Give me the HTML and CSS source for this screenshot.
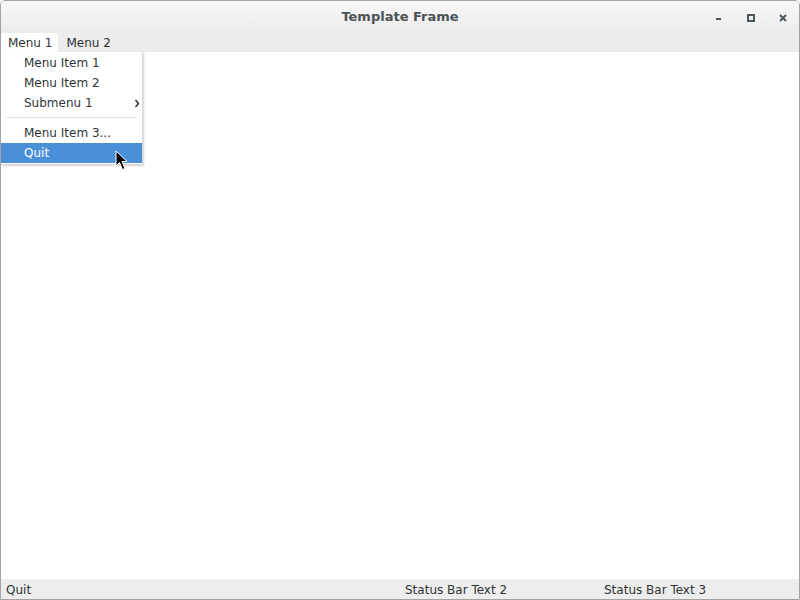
FILE: index.html
```html
<!DOCTYPE html>
<html>
<head>
<meta charset="utf-8">
<link rel="stylesheet" href="styles.css">
</head>
<body>
<div class="window">
  <div class="titlebar">
    <div></div>
    <div class="title">Template Frame</div>
    <div class="buttons">
      <div class="btn"><svg width="8" height="8" viewBox="0 0 8 8"><rect x="1" y="4" width="5" height="2" fill="#4a555c"/></svg></div>
      <div class="btn"><svg width="8" height="8" viewBox="0 0 8 8"><rect x="1" y="1" width="6" height="6" fill="none" stroke="#4a555c" stroke-width="2"/></svg></div>
      <div class="btn"><svg width="8" height="8" viewBox="0 0 8 8"><path d="M1 1 L7 7 M7 1 L1 7" stroke="#4a555c" stroke-width="2"/></svg></div>
    </div>
  </div>
  <div class="menubar">
    <div class="menu active">Menu 1</div>
    <div class="menu">Menu 2</div>
  </div>
  <div class="content"></div>
  <div class="statusbar">
    <div class="field f1">Quit</div>
    <div class="field f2">Status Bar Text 2</div>
    <div class="field f3">Status Bar Text 3</div>
  </div>

  <div class="popup">
    <div class="item">Menu Item 1</div>
    <div class="item">Menu Item 2</div>
    <div class="item sub">Submenu 1<svg class="arrow" width="6" height="9" viewBox="0 0 6 9"><path d="M1.5 1 L4.5 4.5 L1.5 8" fill="none" stroke="#2e3436" stroke-width="1.5"/></svg></div>
    <div class="sep"></div>
    <div class="item">Menu Item 3...</div>
    <div class="item hl">Quit</div>
  </div>
  <svg class="cursor" width="14" height="22" viewBox="0 0 14 22"><path d="M1 1 L1 16 L4.5 12.5 L7.5 19.5 L10 18.5 L7 11.5 L12 11.5 Z" fill="#000" stroke="#fff" stroke-width="1"/></svg>
</div>
</body>
</html>
```
FILE: styles.css
```css
html, body {
  margin: 0;
  padding: 0;
  background: #ffffff;
}
body {
  font-family: "DejaVu Sans", "Liberation Sans", sans-serif;
  font-size: 12px;
  color: #2e3436;
}
.window {
  position: relative;
  width: 800px;
  height: 600px;
  box-sizing: border-box;
  border: 1px solid #a3a3a3;
  border-radius: 5px 5px 0 0;
  display: flex;
  flex-direction: column;
  overflow: hidden;
  background: #ffffff;
}
.titlebar {
  height: 32px;
  flex: none;
  display: grid;
  grid-template-columns: 1fr auto 1fr;
  align-items: center;
  background: linear-gradient(#f8f8f8, #ebebeb);
}
.title {
  font-weight: bold;
  color: #4b5356;
  font-size: 13px;
  margin-top: -1px;
}
.buttons {
  justify-self: end;
  display: flex;
  height: 32px;
}
.btn {
  width: 32px;
  height: 32px;
  display: flex;
  align-items: center;
  justify-content: center;
}
.btn svg { display: block; margin-top: 1px; }
.menubar {
  height: 19px;
  flex: none;
  display: flex;
  background: #ececec;
  align-items: stretch;
}
.menu {
  padding: 1px 7px 0 7px;
  line-height: 19px;
}
.menu.active {
  background: #ffffff;
  border-radius: 4px 4px 0 0;
  padding-right: 6px;
  margin-right: 1px;
}
.content {
  flex: 1;
  background: #ffffff;
}
.statusbar {
  height: 20px;
  flex: none;
  display: flex;
  background: #ededed;
  line-height: 22px;
}
.field { padding-left: 5px; }
.f1 { width: 394px; }
.f2 { width: 194px; }
.f3 { flex: 1; }
.popup {
  position: absolute;
  left: 0;
  top: 51px;
  width: 141px;
  height: 111px;
  background: #ffffff;
  border-right: 1px solid #d6d6d6;
  border-bottom: 1px solid #d6d6d6;
  box-shadow: 1px 1px 2px rgba(0,0,0,0.18);
  padding-top: 1px;
  box-sizing: content-box;
}
.item {
  height: 20px;
  line-height: 20px;
  padding-left: 23px;
  position: relative;
}
.sub .arrow {
  position: absolute;
  right: 2px;
  top: 6px;
}
.sep {
  height: 1px;
  background: #e1e1e1;
  margin: 4px 5px 5px 5px;
}
.item.hl {
  background: #4a90d9;
  color: #ffffff;
}
.cursor {
  position: absolute;
  left: 114px;
  top: 149px;
}
```
